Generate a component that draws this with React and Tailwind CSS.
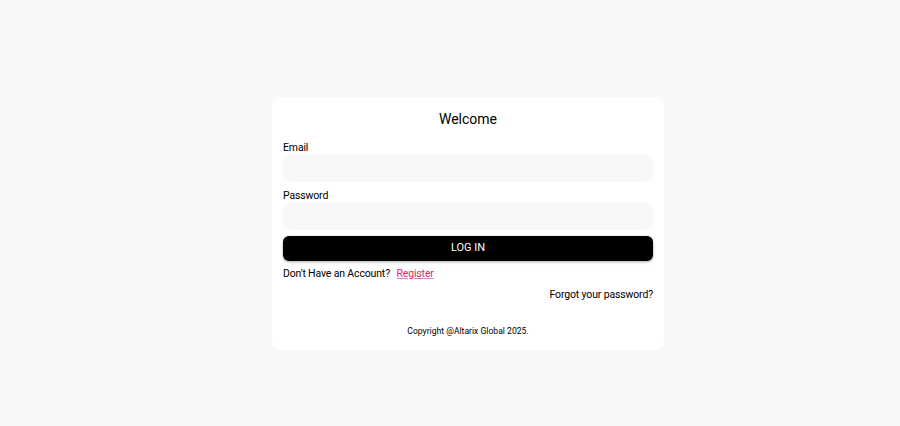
export default function App() {
  return (
    <div
      className="flex min-h-[426px] w-full items-start justify-center bg-[#f8f8f8] pt-[97px] pl-[36px] text-black"
      style={{ fontFamily: "Roboto, 'Noto Sans', sans-serif" }}
    >
      <div className="flex w-[392px] flex-col rounded-lg bg-white px-[11px] pt-[12px] pb-[13px]">
        <h1 className="text-center text-[14px] leading-[20px] font-normal">Welcome</h1>

        <label className="mt-[12px] text-[10.5px] leading-[14px] tracking-[-0.15px]">Email</label>
        <input type="text" className="h-[27px] w-full rounded-lg bg-[#f7f7f7] outline-none" />

        <label className="mt-[7px] text-[10.5px] leading-[14px] tracking-[-0.15px]">Password</label>
        <input type="password" className="h-[27px] w-full rounded-lg bg-[#f7f7f7] outline-none" />

        <button className="mt-[6px] h-[25px] w-full rounded-md bg-black text-[11px] text-white shadow-[0_1px_3px_rgba(0,0,0,0.35)]">
          LOG IN
        </button>

        <p className="mt-[6px] text-[10.5px] leading-[14px] tracking-[-0.15px]">
          Don't Have an Account?{" "}
          <a href="#" className="ml-[4px] text-[#f0186c] underline decoration-[#b98ce6]">
            Register
          </a>
        </p>

        <p className="mt-[7px] text-right text-[10.5px] leading-[14px] tracking-[-0.15px]">Forgot your password?</p>

        <p className="mt-[23px] text-center text-[8.6px] leading-[12px]">Copyright @Altarix Global 2025.</p>
      </div>
    </div>
  );
}
